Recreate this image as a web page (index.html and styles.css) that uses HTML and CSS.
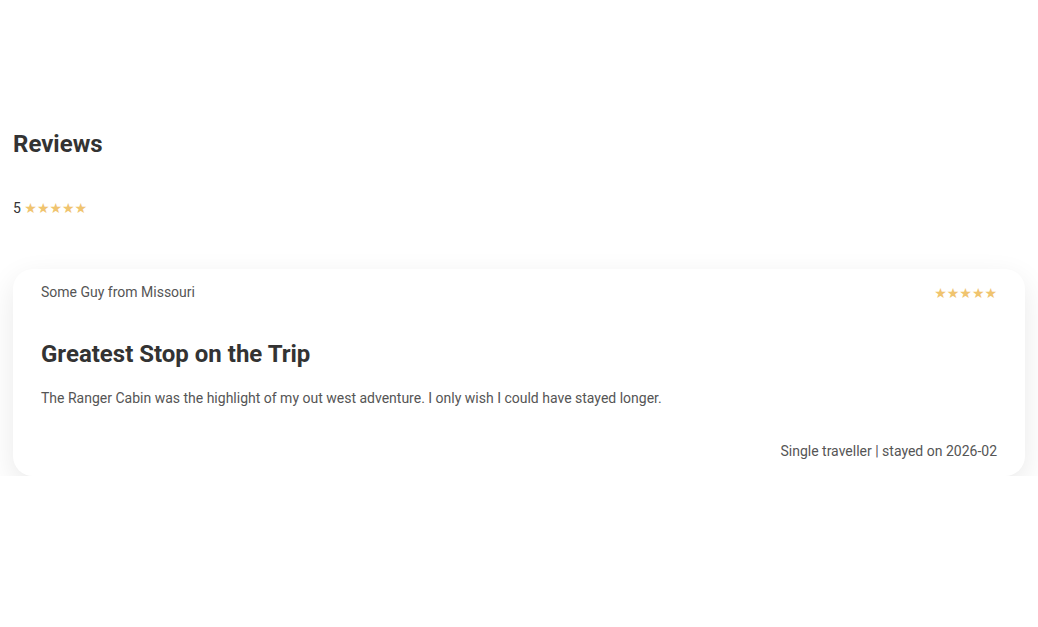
FILE: index.html
```html
<!DOCTYPE html>
<html>
<head>
<meta charset="utf-8">
<link rel="stylesheet" href="styles.css">
</head>
<body>
<section class="reviews">
  <h2 class="reviews-title">Reviews</h2>
  <div class="summary"><span class="score">5</span> <span class="stars">★★★★★</span></div>
  <article class="card">
    <div class="card-head">
      <span class="author">Some Guy from Missouri</span>
      <span class="stars card-stars">★★★★★</span>
    </div>
    <h3 class="card-title">Greatest Stop on the Trip</h3>
    <p class="card-body">The Ranger Cabin was the highlight of my out west adventure. I only wish I could have stayed longer.</p>
    <div class="card-foot">Single traveller | stayed on 2026-02</div>
  </article>
</section>
</body>
</html>
```
FILE: styles.css
```css
html, body {
  margin: 0;
  background: #fff;
}
body {
  font-family: Roboto, "Liberation Sans", sans-serif;
  color: #555;
}
.reviews {
  padding: 130px 13px 0;
}
.reviews-title {
  margin: 0;
  font-size: 24px;
  line-height: 28px;
  font-weight: 700;
  color: #333;
}
.summary {
  margin-top: 40px;
  font-size: 14px;
  line-height: 20px;
  color: #333;
}
.stars {
  font-family: "DejaVu Sans", sans-serif;
  font-size: 14px;
  color: #f0c46f;
  letter-spacing: 0;
}
.card-stars {
  margin-top: 1px;
  margin-bottom: -1px;
}
.card {
  margin-top: 51px;
  background: #fff;
  border-radius: 20px;
  box-shadow: 0 10px 30px rgba(0, 0, 0, 0.09);
  padding: 13px 28px 15px;
}
.card-head {
  display: flex;
  justify-content: space-between;
  align-items: flex-start;
  font-size: 14px;
  line-height: 20px;
}
.author {
  color: #555;
}
.card-title {
  margin: 38px 0 0;
  font-size: 24px;
  line-height: 28px;
  font-weight: 700;
  color: #333;
}
.card-body {
  margin: 20px 0 0;
  font-size: 14px;
  line-height: 20px;
  color: #555;
}
.card-foot {
  margin-top: 33px;
  text-align: right;
  font-size: 14px;
  line-height: 20px;
  color: #555;
}
```
